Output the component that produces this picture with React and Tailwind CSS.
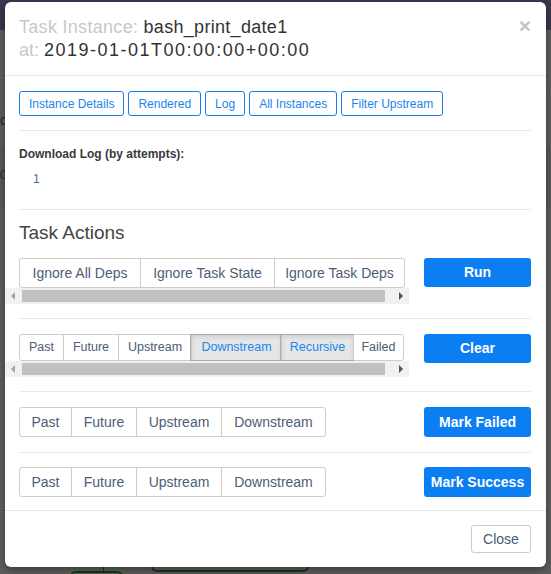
import React from "react";

const navButtons = ["Instance Details", "Rendered", "Log", "All Instances", "Filter Upstream"];

const depsGroup = [
  { label: "Ignore All Deps", w: "w-[120px]" },
  { label: "Ignore Task State", w: "w-[134px]" },
  { label: "Ignore Task Deps", w: "w-[130px]" },
];

const clearGroup = [
  { label: "Past", w: "w-[43px]" },
  { label: "Future", w: "w-[55px]" },
  { label: "Upstream", w: "w-[73px]" },
  { label: "Downstream", w: "w-[90px]", active: true },
  { label: "Recursive", w: "w-[72px]", active: true },
  { label: "Failed", w: "w-[50px]" },
];

const markGroup = [
  { label: "Past", w: "w-[51px]" },
  { label: "Future", w: "w-[65px]" },
  { label: "Upstream", w: "w-[85px]" },
  { label: "Downstream", w: "w-[104px]" },
];

function Scrollbar() {
  return (
    <div className="flex h-4 w-[404px] items-center bg-[#f1f1f1]">
      <div className="flex h-4 w-[16px] items-center justify-center">
        <span className="h-0 w-0 border-y-[4px] border-r-[4px] border-y-transparent border-r-[#a3a3a3]" />
      </div>
      <div className="ml-[1px] h-[12px] w-[363px] bg-[#c1c1c1]" />
      <div className="ml-auto flex h-4 w-[16px] items-center justify-center">
        <span className="h-0 w-0 border-y-[4px] border-l-[4px] border-y-transparent border-l-[#505050]" />
      </div>
    </div>
  );
}

function Group({ items, size, height }) {
  return (
    <div className={`flex ${height} w-fit rounded-[3px] border border-[#cccccc] bg-white`}>
      {items.map((it, i) => (
        <div
          key={it.label}
          className={`flex ${it.w} shrink-0 items-center justify-center overflow-hidden whitespace-nowrap ${size} ${
            i > 0 ? "border-l border-[#cccccc]" : ""
          } ${
            it.active
              ? "bg-[#e6e6e6] text-[#1a86ec] shadow-[inset_0_2px_4px_rgba(0,0,0,0.1)] outline outline-1 outline-[#adadad]"
              : "text-[#4d5d78]"
          }`}
        >
          {it.label}
        </div>
      ))}
    </div>
  );
}

function PrimaryButton({ children, h }) {
  return (
    <div
      className={`flex ${h} w-[107px] items-center justify-center overflow-hidden whitespace-nowrap rounded-[3px] bg-[#0b7ef2] text-[14px] font-bold text-white`}
    >
      {children}
    </div>
  );
}

function Divider({ className }) {
  return <div className={`h-px bg-[#e9e9e9] ${className}`} />;
}

export default function App() {
  return (
    <div
      className="relative h-[574px] w-[551px] overflow-hidden bg-[#5e5e5e]"
      style={{ fontFamily: '"Liberation Sans", Arial, sans-serif' }}
    >
      {/* dimmed page behind the modal */}
      <div className="absolute left-0 top-0 h-[30px] w-full bg-[#3b3850]" />
      <div className="absolute left-0 top-[92px] h-px w-full bg-[#565656]" />
      <div className="absolute left-0 top-[146px] h-[60px] w-full bg-[#595959]" />
      <div className="absolute left-0 top-[206px] h-px w-full bg-[#525252]" />
      <div className="absolute left-0 top-[110px] text-[14px] text-[#2a2a2a]">d</div>
      <div className="absolute left-0 top-[166px] text-[12px] text-[#2a2a2a]">0:</div>
      <div className="absolute left-[151px] top-[520px] h-[52px] w-[158px] rounded-[6px] border-2 border-[#123d12]" />
      <div className="absolute left-[103px] top-[560px] h-[12px] w-px bg-[#123d12]" />
      <div className="absolute left-[70px] top-[571px] h-[20px] w-[53px] rounded-[6px] border-2 border-[#123d12]" />

      <div className="relative z-10 ml-[5px] mt-[2px] w-[541px] rounded-[6px] bg-white shadow-[0_3px_9px_rgba(0,0,0,0.4)]">
        {/* header */}
        <div className="flex items-start justify-between border-b border-[#e5e5e5] pb-[13px] pl-[14px] pr-[15px] pt-[14px]">
          <div className="text-[18px] leading-[23px] text-[#333]">
            <div>
              <span className="tracking-[0.3px] text-[#c8c8c8]">Task Instance: </span>
              <span className="tracking-[0.3px]">bash_print_date1</span>
            </div>
            <div>
              <span className="text-[#c8c8c8]">at: </span>
              <span className="tracking-[1.5px]">2019-01-01T00:00:00+00:00</span>
            </div>
          </div>
          <div className="mr-[0px] mt-[-2px] text-[21px] font-bold leading-[23px] text-[#c4c4c4]">×</div>
        </div>

        {/* body */}
        <div className="pb-[13px] pl-[14px] pr-[15px] pt-[15px]">
          <div className="flex gap-[4px]">
            {navButtons.map((b) => (
              <div
                key={b}
                className="flex h-[25px] items-center rounded-[3px] border border-[#1a7de8] px-[9px] text-[12px] text-[#1a86ec]"
              >
                {b}
              </div>
            ))}
          </div>

          <Divider className="mt-[14px]" />

          <div className="mt-[15px] text-[12px] font-bold leading-[17px] text-[#3a3a3a]">
            Download Log (by attempts):
          </div>
          <div className="ml-[14px] mt-[8px] text-[12px] leading-[17px] text-[#3d6fa6]">1</div>

          <Divider className="mt-[21px]" />

          <div className="mt-[12px] text-[19px] leading-[22px] text-[#444]">Task Actions</div>

          <div className="mt-[14px] flex items-start justify-between">
            <div className="-ml-[14px]">
              <div className="pl-[14px]">
                <Group items={depsGroup} size="text-[14px]" height="h-[30px]" />
              </div>
              <Scrollbar />
            </div>
            <PrimaryButton h="h-[29px]">Run</PrimaryButton>
          </div>

          <Divider className="mt-[14px]" />

          <div className="mt-[15px] flex items-start justify-between">
            <div className="-ml-[14px]">
              <div className="pl-[14px]">
                <Group items={clearGroup} size="text-[12.5px]" height="h-[27px]" />
              </div>
              <Scrollbar />
            </div>
            <PrimaryButton h="h-[29px]">Clear</PrimaryButton>
          </div>

          <Divider className="mt-[14px]" />

          <div className="mt-[15px] flex items-start justify-between">
            <Group items={markGroup} size="text-[14px]" height="h-[30px]" />
            <PrimaryButton h="h-[30px]">Mark Failed</PrimaryButton>
          </div>

          <Divider className="mt-[15px]" />

          <div className="mt-[14px] flex items-start justify-between">
            <Group items={markGroup} size="text-[14px]" height="h-[30px]" />
            <PrimaryButton h="h-[30px]">Mark Success</PrimaryButton>
          </div>
        </div>

        {/* footer */}
        <div className="flex justify-end border-t border-[#e5e5e5] pb-[14px] pr-[15px] pt-[14px]">
          <div className="flex h-[28px] w-[60px] items-center justify-center rounded-[3px] border border-[#cccccc] text-[14px] text-[#4a5b75]">
            Close
          </div>
        </div>
      </div>
    </div>
  );
}
